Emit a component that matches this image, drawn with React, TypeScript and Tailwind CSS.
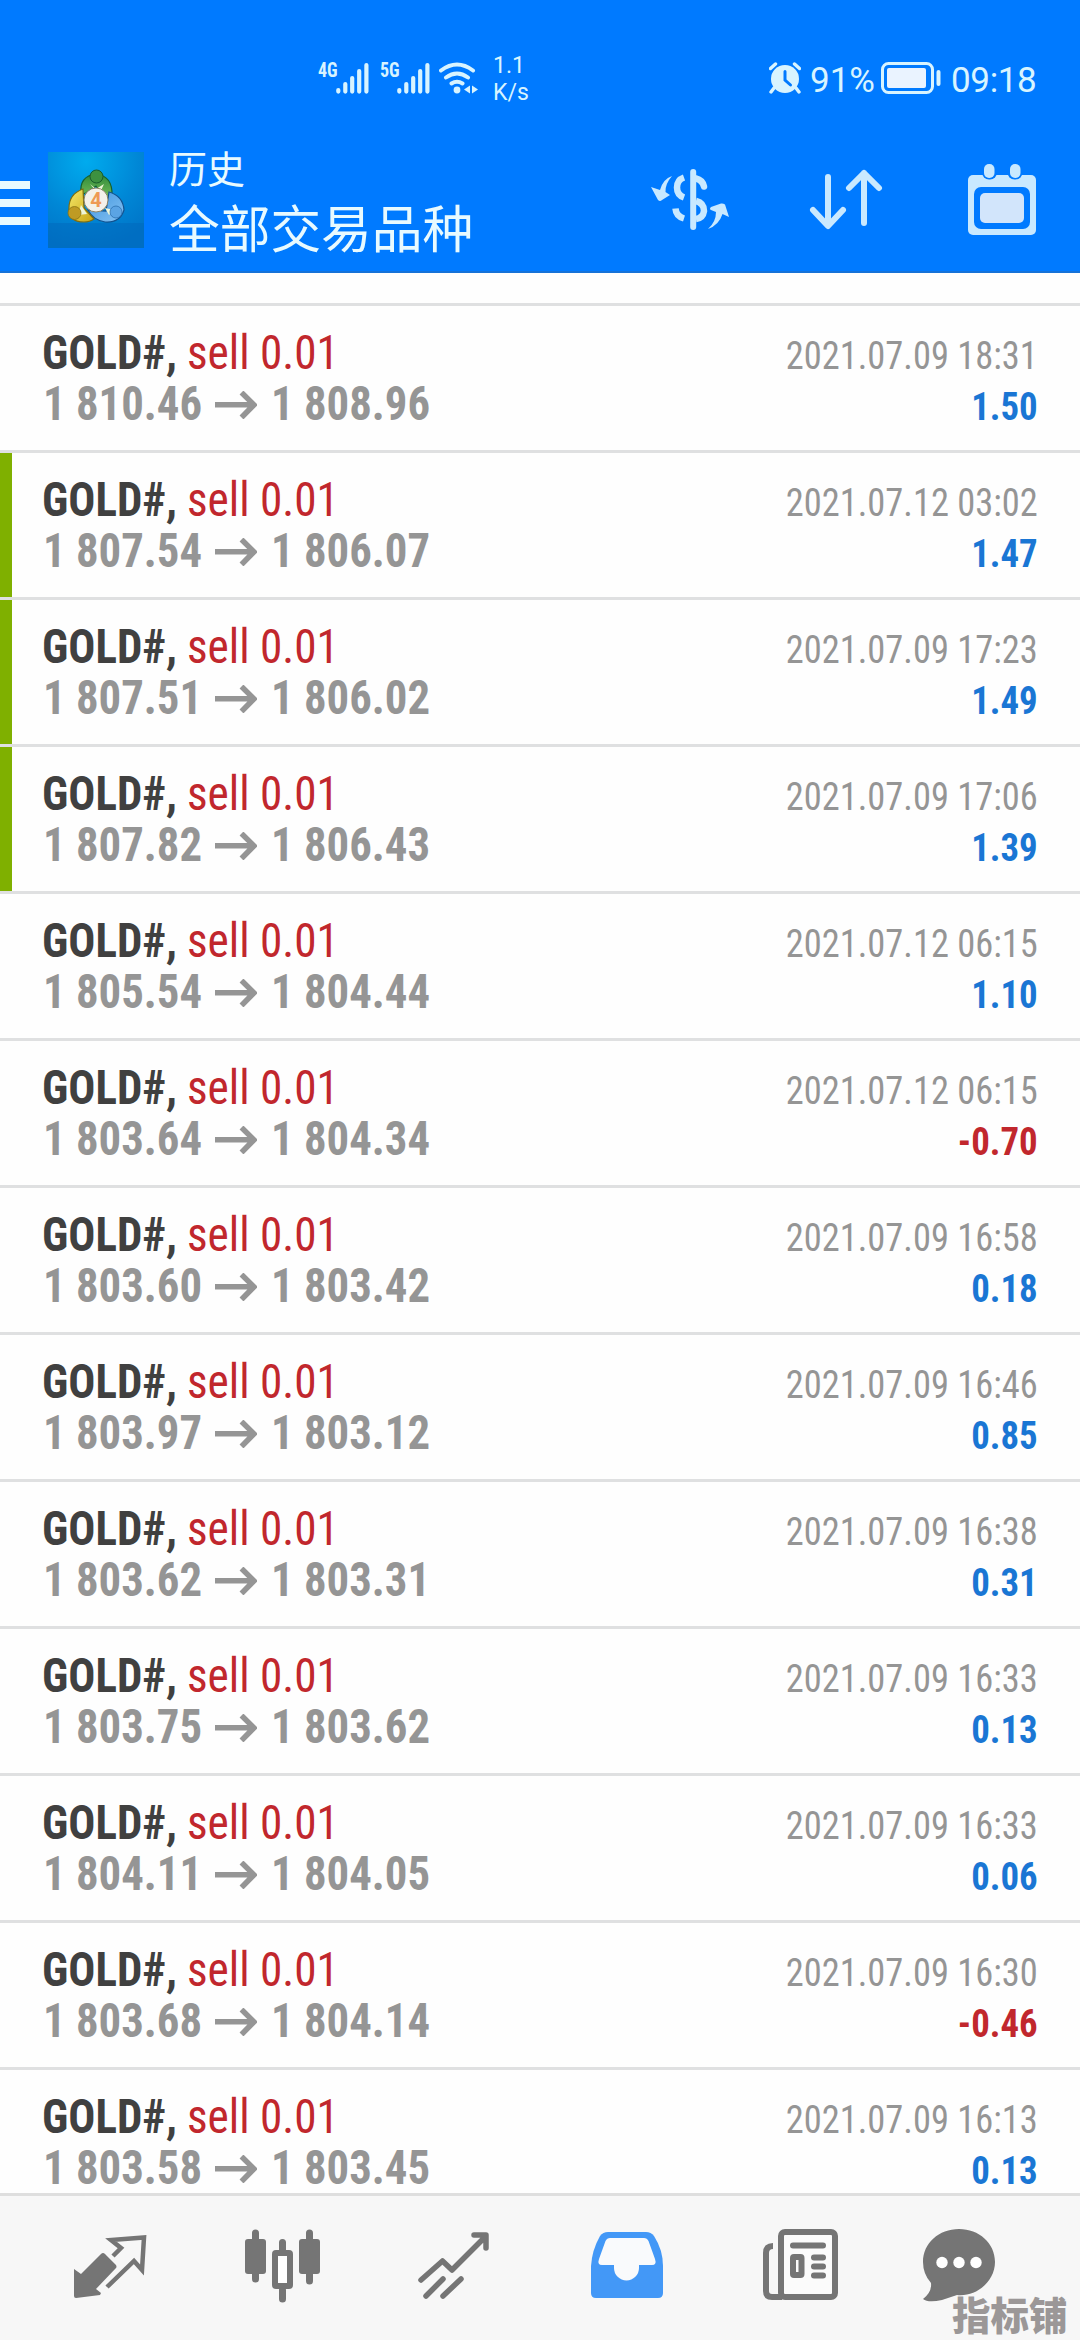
import React from 'react';

const deals = [
  { open: '1 810.46', close: '1 808.96', time: '2021.07.09 18:31', profit: '1.50' },
  { open: '1 807.54', close: '1 806.07', time: '2021.07.12 03:02', profit: '1.47', marked: true },
  { open: '1 807.51', close: '1 806.02', time: '2021.07.09 17:23', profit: '1.49', marked: true },
  { open: '1 807.82', close: '1 806.43', time: '2021.07.09 17:06', profit: '1.39', marked: true },
  { open: '1 805.54', close: '1 804.44', time: '2021.07.12 06:15', profit: '1.10' },
  { open: '1 803.64', close: '1 804.34', time: '2021.07.12 06:15', profit: '-0.70' },
  { open: '1 803.60', close: '1 803.42', time: '2021.07.09 16:58', profit: '0.18' },
  { open: '1 803.97', close: '1 803.12', time: '2021.07.09 16:46', profit: '0.85' },
  { open: '1 803.62', close: '1 803.31', time: '2021.07.09 16:38', profit: '0.31' },
  { open: '1 803.75', close: '1 803.62', time: '2021.07.09 16:33', profit: '0.13' },
  { open: '1 804.11', close: '1 804.05', time: '2021.07.09 16:33', profit: '0.06' },
  { open: '1 803.68', close: '1 804.14', time: '2021.07.09 16:30', profit: '-0.46' },
  { open: '1 803.58', close: '1 803.45', time: '2021.07.09 16:13', profit: '0.13' },
];

function Signal() {
  return (
    <svg className="w-[34px] h-8 shrink-0" viewBox="0 0 34 32" stroke="currentColor" strokeWidth="4.2" strokeLinecap="round">
      <path d="M2.3 28v1.6M9.3 22v7.6M16.2 16v13.6M23.2 9v20.6M30.4 3v26.6" />
    </svg>
  );
}

function StatusBar() {
  return (
    <div className="flex h-[130px] pt-[62px] pl-[318px] text-[#d8f4ff]">
      <span className="w-[18px] h-5 text-[20px] leading-[16px] font-bold font-stretch-condensed origin-left scale-x-[0.9]">4G</span>
      <Signal />
      <span className="ml-[10px] w-[17px] h-5 text-[20px] leading-[16px] font-bold font-stretch-condensed origin-left scale-x-[0.9]">5G</span>
      <Signal />
      <svg className="ml-2 w-10 h-8 shrink-0" viewBox="0 0 40 32" fill="none" stroke="currentColor" strokeWidth="4" strokeLinecap="round">
        <path d="M2 8.500Q18 -3.500 34 8.500M7 15.500Q18 7.500 29 15.500M12.500 21.500Q18 18 23.500 21.500" />
        <circle cx="18" cy="28" r="3.400" fill="currentColor" stroke="none" />
        <path d="M31 23.500v8l-6-4zM33 23.500v8l6-4z" fill="currentColor" stroke="none" />
      </svg>
      <div className="-mt-[10px] ml-[14px] w-10 text-[23px] leading-[27px]">
        <div>1.1</div>
        <div>K/s</div>
      </div>
      <svg className="ml-[236px] w-8 h-8 shrink-0" viewBox="0 0 32 32">
        <path d="M1.500 6.500l5-4.500M30.500 6.500l-5-4.500" stroke="currentColor" strokeWidth="3.400" strokeLinecap="round" />
        <path d="M5 26l-3 4M27 26l3 4" stroke="currentColor" strokeWidth="3.400" strokeLinecap="round" />
        <circle cx="16" cy="17" r="14" fill="currentColor" />
        <path d="M16 9.500v8.500l5.500 5" fill="none" stroke="#007aff" strokeWidth="3" strokeLinecap="round" />
      </svg>
      <span className="ml-[9px] w-[71px] mt-px text-[35px] leading-9">91%</span>
      <svg className="w-[61px] h-8 shrink-0" viewBox="0 0 61 32">
        <rect x="1.500" y="1.500" width="50" height="29" rx="6" fill="none" stroke="currentColor" strokeWidth="3" />
        <rect x="6" y="6" width="39" height="20" rx="2" fill="#eaf3ff" />
        <rect x="55.500" y="8" width="4" height="16" rx="2" fill="currentColor" />
      </svg>
      <span className="ml-[9px] mt-px text-[35px] leading-9 tracking-[-0.01em]">09:18</span>
    </div>
  );
}

function Logo() {
  return (
    <svg className="w-24 h-24 shrink-0" viewBox="0 0 96 96">
      <defs>
        <radialGradient id="sky" cx="0.4" cy="0.1" r="0.9">
          <stop offset="0" stopColor="#00abee" />
          <stop offset="0.6" stopColor="#0087d6" />
          <stop offset="1" stopColor="#0075c8" />
        </radialGradient>
        <linearGradient id="green" x1="0" y1="0" x2="0" y2="1">
          <stop offset="0" stopColor="#2f8a3a" />
          <stop offset="1" stopColor="#86c860" />
        </linearGradient>
        <linearGradient id="gold" x1="0" y1="0" x2="1" y2="1">
          <stop offset="0" stopColor="#f4e86a" />
          <stop offset="1" stopColor="#c9a412" />
        </linearGradient>
        <linearGradient id="azure" x1="0" y1="0" x2="1" y2="1">
          <stop offset="0" stopColor="#3e93dc" />
          <stop offset="1" stopColor="#86c3f4" />
        </linearGradient>
      </defs>
      <rect width="96" height="96" fill="url(#sky)" />
      <rect y="71" width="96" height="25" fill="#0068bb" opacity="0.5" />
      <path d="M33 42Q31 24 48 22Q65 24 64 44L60 52L48 34L38 41Z" fill="url(#green)" stroke="#17602c" strokeWidth="1.200" />
      <path d="M61 40Q75 44 76 58Q72 71 57 70Q45 68 40 58L58 59Z" fill="url(#azure)" stroke="#12528f" strokeWidth="1.200" />
      <path d="M35 37Q21 42 21 56Q20 70 36 70Q42 70 46 67L36 56Z" fill="url(#gold)" stroke="#7d6c10" strokeWidth="1.200" />
      <path d="M42 32l6 5 8-5-5 11zM33 53l6 9-9 1zM57 56l4 7 5-5z" fill="#eef6d8" />
      <circle cx="48.500" cy="24.500" r="6.500" fill="#3d9140" stroke="#1a5c2c" />
      <circle cx="26.500" cy="61" r="6.500" fill="#bf9b24" stroke="#8a7212" strokeWidth="0.800" />
      <circle cx="68" cy="60" r="6" fill="#5ba4e4" stroke="#2b70b0" strokeWidth="0.800" />
      <circle cx="48" cy="48" r="12" fill="#f4f1ea" stroke="#8d8468" />
      <text x="48" y="55" textAnchor="middle" className="fill-[#ee9a55] text-[20px] font-bold">4</text>
    </svg>
  );
}

function Header() {
  return (
    <header className="h-[273px] shrink-0 bg-[#007aff] border-b-2 border-[#1672d8]">
      <StatusBar />
      <div className="flex text-[#e8faff]">
        <div className="mt-[51px] flex w-[30px] flex-col gap-[10px]">
          <div className="h-2 bg-current" />
          <div className="h-2 bg-current" />
          <div className="h-2 bg-current" />
        </div>
        <div className="mt-[22px] ml-[18px]">
          <Logo />
        </div>
        <div className="ml-[25px] w-[420px] font-['Noto_Sans_CJK_SC',sans-serif]">
          <div className="mt-[12px] text-[38px] leading-[50px]">历史</div>
          <div className="mt-[4px] text-[50.7px] leading-[60px]">全部交易品种</div>
        </div>
        <div className="flex text-[#c9e9ff]">
          <svg className="mt-[37px] ml-[61px] h-16 w-20" viewBox="0 0 80 64" fill="none" stroke="currentColor">
            <path d="M43.200 5v55" strokeWidth="6" strokeLinecap="round" />
            <path d="M34 10.500Q27 13 27 20.500Q27 28 34 30.500" strokeWidth="6.500" />
            <path d="M46 11.500Q52.500 13 54 19.500" strokeWidth="6.500" strokeLinecap="round" />
            <path d="M46 34Q54 36 54 44Q53 51 46 52" strokeWidth="6.500" />
            <path d="M25.500 41.500Q26 49 34 51.500" strokeWidth="6.500" />
            <path d="M22 9Q13 12 10 23L1 20L8 33Q10 35 12 33L20 28L15.500 25Q15 17 22 9Z" fill="currentColor" stroke="none" />
            <path d="M58 62Q69 58 72.500 47L79 50L75 37.500Q73 36 71 36.500L61 40Q59 42 61 43L66 45Q66 55 58 62Z" fill="currentColor" stroke="none" />
          </svg>
          <svg className="mt-[37px] ml-[79px] h-16 w-[76px]" viewBox="0 0 76 64" fill="none" stroke="currentColor" strokeWidth="6" strokeLinecap="round" strokeLinejoin="round">
            <path d="M19 10v48M4 43l15 16 15-16M55 56V6M40 21L55 6l15 15" />
          </svg>
          <svg className="mt-[34px] ml-[82px] h-[72px] w-[70px]" viewBox="0 0 70 72">
            <rect x="1" y="11" width="68" height="60" rx="5" fill="currentColor" />
            <rect x="15" y="-4" width="15" height="19.500" rx="7" fill="#007aff" />
            <rect x="40.500" y="-4" width="15" height="19.500" rx="7" fill="#007aff" />
            <rect x="17" y="0" width="10.500" height="14" rx="5" fill="currentColor" />
            <rect x="43" y="0" width="10.500" height="14" rx="5" fill="currentColor" />
            <rect x="7" y="23" width="56" height="42" rx="7" fill="#007aff" />
            <rect x="13" y="29" width="44" height="30" rx="5" fill="#d2e5fb" />
          </svg>
        </div>
      </div>
    </header>
  );
}

function DealRow({ deal }: { deal: (typeof deals)[number] }) {
  const loss = deal.profit.startsWith('-');
  return (
    <div className="flex h-[147px] shrink-0 border-b-[3px] border-[#dfe0e1] font-stretch-condensed">
      <div className={`w-3 ${deal.marked ? 'bg-[#7fb000]' : ''}`} />
      <div className="flex flex-1 justify-between pl-[30px] pr-[42px] whitespace-nowrap">
        <div className="pt-[21px] text-5xl leading-[51px]">
          <div className="flex">
            <span className="w-[145px] origin-left scale-x-[0.936] font-bold text-[#404040]">GOLD#,</span>
            <span className="origin-left scale-x-[0.942] text-[#c1272d]">sell 0.01</span>
          </div>
          <div className="ml-px flex font-bold text-[#959595]">
            <span className="w-[172px] origin-left scale-x-[0.933]">{deal.open}</span>
            <svg className="mt-[13px] w-[42px] h-7" viewBox="0 0 42 28" fill="none" stroke="currentColor" strokeWidth="5.500">
              <path d="M0 13.800h38M26.500 1.500L39 13.800L26.500 26.500" />
            </svg>
            <span className="ml-[14px] origin-left scale-x-[0.933]">{deal.close}</span>
          </div>
        </div>
        <div className="pt-[25px] text-right text-[39px] leading-[51px]">
          <div className="origin-right scale-x-[0.934] text-[#959595]">{deal.time}</div>
          <div className={`origin-right scale-x-[0.944] font-bold ${loss ? 'text-[#c1272d]' : 'text-[#1a76d4]'}`}>{deal.profit}</div>
        </div>
      </div>
    </div>
  );
}

function BottomNav() {
  return (
    <nav className="relative h-[147px] shrink-0 border-t-[3px] border-[#dedede] bg-[#f7f7f7] text-[#757575]">
      <div className="flex">
        <svg className="mt-[38px] ml-[73px] h-[64px] w-[74px]" viewBox="0 0 74 64" fill="none" stroke="currentColor">
          <path d="M1 35L8 40L28 20Q30 18 32 20L43 31Q44 33 43 34L23 55L28 59L27 61L3 64Q1 64 1 62Z" fill="currentColor" stroke="none" />
          <path d="M40 22L48 14L38 6L71 3.500L69 36L61 27L34 53" strokeWidth="4.500" />
        </svg>
        <svg className="mt-[32px] ml-[97px] h-[76px] w-[76px]" viewBox="0 0 76 76">
          <path d="M11.500 5v46M38.500 14.500v8M38.500 62v9M65.500 5v48" stroke="currentColor" strokeWidth="7" strokeLinecap="round" />
          <rect x="1" y="11" width="21" height="35" rx="3" fill="currentColor" />
          <rect x="31" y="25" width="15" height="33" rx="1" fill="#fff" stroke="currentColor" strokeWidth="6" />
          <rect x="55" y="11" width="21" height="35" rx="3" fill="currentColor" />
        </svg>
        <svg className="mt-[35px] ml-[98px] h-[68px] w-[72px]" viewBox="0 0 72 68" fill="none" stroke="currentColor" strokeWidth="5.500" strokeLinecap="round" strokeLinejoin="round">
          <path d="M3 49L24.500 30L34 39L67 6M56 4H68V17M8 65L25 48M25 65L43 48" />
        </svg>
        <svg className="mt-[36px] ml-[101px] h-[66px] w-[72px]" viewBox="0 0 72 66">
          <path d="M17 0H55Q60 0 63 4Q72 18 72 34V61Q72 66 67 66H5Q0 66 0 61V34Q1 18 9 4Q12 0 17 0Z" fill="#4398f7" />
          <path d="M19 6H53Q56 6 57.500 9L64 27Q66 33 61 33H48V36A12.500 12.500 0 0 1 23 36V33H11Q6 33 8 27L14.500 9Q16 6 19 6Z" fill="#f9fafc" />
        </svg>
        <svg className="mt-[32px] ml-[99px] h-[74px] w-[76px]" viewBox="0 0 76 74" fill="none" stroke="currentColor" strokeWidth="6">
          <path d="M11 18Q4 18 4 25V63Q4 69 10 69H20" />
          <rect x="19" y="4" width="54" height="65" rx="4" fill="#fbfbfb" />
          <path d="M31 17.500h30M52 29.500h9M52 38.500h9M52 47.500h9" strokeLinecap="round" />
          <rect x="31" y="29" width="8.500" height="18" rx="1" />
        </svg>
        <svg className="mt-[32px] ml-[84px] h-[74px] w-[74px]" viewBox="0 0 74 74">
          <path d="M37 1C57 1 73 15 73 34C73 53 55 69 35 67Q26 70 20 72Q6 75 1 71Q10 64 9 55Q1 46 1 34C1 15 17 1 37 1Z" fill="currentColor" />
          <circle cx="20" cy="34.500" r="5.700" fill="#fff" />
          <circle cx="37" cy="34.500" r="5.700" fill="#fff" />
          <circle cx="54" cy="34.500" r="5.700" fill="#fff" />
        </svg>
      </div>
      <span className="absolute top-[95px] left-[952px] font-['Noto_Sans_CJK_SC',sans-serif] text-[38.5px] leading-[44px] font-black whitespace-nowrap text-[#9b9797]">指标铺</span>
    </nav>
  );
}

export default function App() {
  return (
    <div className="flex h-[2340px] w-[1080px] flex-col overflow-hidden bg-[#fefefe] font-[Roboto,sans-serif]">
      <Header />
      <main className="flex min-h-0 flex-1 flex-col overflow-hidden">
        <div className="h-[33px] shrink-0 border-b-[3px] border-[#dfe0e1]" />
        {deals.map((deal, i) => (
          <DealRow key={i} deal={deal} />
        ))}
      </main>
      <BottomNav />
    </div>
  );
}
